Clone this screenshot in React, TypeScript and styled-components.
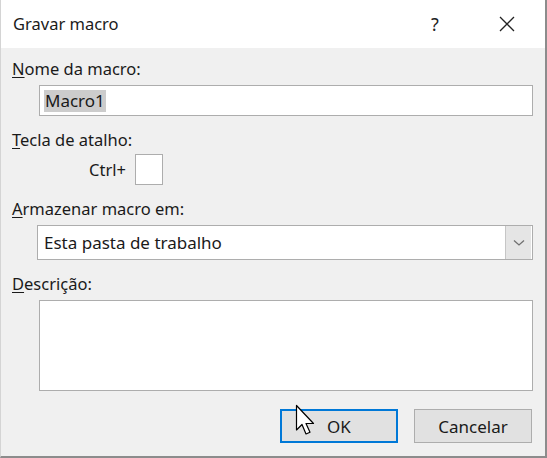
import React from "react";
import styled, { createGlobalStyle } from "styled-components";

const Global = createGlobalStyle`
  html, body { margin: 0; padding: 0; background: #ffffff; }
  * { box-sizing: border-box; }
`;

const Dialog = styled.div`
  position: relative;
  width: 547px;
  height: 458px;
  display: flex;
  flex-direction: column;
  background: #f0f0f0;
  border-left: 1px solid #d4d4d4;
  border-right: 2px solid #8c8c8c;
  border-bottom: 2px solid #8c8c8c;
  font-family: "Noto Sans", "Open Sans", sans-serif;
  color: #1a1a1a;
  overflow: hidden;
`;

const TitleBar = styled.div`
  height: 48px;
  flex: none;
  background: #ffffff;
  display: flex;
  align-items: center;
  padding-left: 12px;
`;

const Title = styled.div`
  flex: 1;
  font-size: 16.5px;
  color: #1b1b1b;
  padding-bottom: 2px;
`;

const TitleButton = styled.div<{ $w: number }>`
  width: ${(p) => p.$w}px;
  height: 48px;
  display: flex;
  align-items: center;
  justify-content: center;
  font-size: 18px;
  color: #222;
`;

const Body = styled.div`
  flex: 1;
  display: flex;
  flex-direction: column;
  padding: 11px 12px 0 11px;
`;

const Label = styled.div<{ $mt?: number }>`
  font-size: 16.5px;
  line-height: 20px;
  margin-top: ${(p) => p.$mt ?? 0}px;
  color: #1a1a1a;
  u { text-decoration: underline; text-underline-offset: 2px; }
`;

const Field = styled.div<{ $ml: number; $h: number; $mt: number }>`
  margin-left: ${(p) => p.$ml}px;
  margin-top: ${(p) => p.$mt}px;
  height: ${(p) => p.$h}px;
  background: #ffffff;
  border: 1px solid #adadad;
  display: flex;
  align-items: center;
  font-size: 17px;
`;

const Selected = styled.span`
  margin-left: 4px;
  background: #cccccc;
  padding: 0 1px 0 1px;
  line-height: 22px;
`;

const ShortcutRow = styled.div`
  display: flex;
  align-items: center;
  margin-top: 4px;
  padding-left: 77px;
  gap: 9px;
  font-size: 16.5px;
`;

const KeyBox = styled.div`
  width: 28px;
  height: 31px;
  background: #ffffff;
  border: 1px solid #adadad;
`;

const SelectText = styled.div`
  flex: 1;
  padding-left: 6px;
`;

const DropButton = styled.div`
  width: 26px;
  height: 100%;
  background: #e5e5e5;
  border-left: 1px solid #c6c6c6;
  display: flex;
  align-items: center;
  justify-content: center;
  margin-right: 1px;
`;

const Footer = styled.div`
  display: flex;
  justify-content: flex-end;
  gap: 16px;
  margin-top: 18px;
  padding-right: 1px;
`;

const Button = styled.div<{ $default?: boolean }>`
  width: 118px;
  height: 34px;
  display: flex;
  align-items: center;
  justify-content: center;
  background: #e1e1e1;
  border: ${(p) => (p.$default ? "2px solid #0078d7" : "1px solid #adadad")};
  font-size: 17px;
  color: #1a1a1a;
`;

const Cursor = styled.svg`
  position: absolute;
  left: 294px;
  top: 404px;
`;

export default function App() {
  return (
    <>
      <Global />
      <Dialog>
        <TitleBar>
          <Title>Gravar macro</Title>
          <TitleButton $w={68}>?</TitleButton>
          <TitleButton $w={76}>
            <svg width="16" height="16" viewBox="0 0 16 16">
              <path d="M1 1 L15 15 M15 1 L1 15" stroke="#222" strokeWidth="1.3" />
            </svg>
          </TitleButton>
        </TitleBar>
        <Body>
          <Label>
            <u>N</u>ome da macro:
          </Label>
          <Field $ml={27} $h={31} $mt={6}>
            <Selected>Macro1</Selected>
          </Field>
          <Label $mt={14}>
            <u>T</u>ecla de atalho:
          </Label>
          <ShortcutRow>
            <span>Ctrl+</span>
            <KeyBox />
          </ShortcutRow>
          <Label $mt={14}>
            <u>A</u>rmazenar macro em:
          </Label>
          <Field $ml={25} $h={35} $mt={6}>
            <SelectText>Esta pasta de trabalho</SelectText>
            <DropButton>
              <svg width="12" height="8" viewBox="0 0 12 8">
                <path d="M1 1.5 L6 6 L11 1.5" stroke="#707070" strokeWidth="1.3" fill="none" />
              </svg>
            </DropButton>
          </Field>
          <Label $mt={14}>
            <u>D</u>escrição:
          </Label>
          <Field $ml={27} $h={91} $mt={6} />
          <Footer>
            <Button $default>OK</Button>
            <Button>Cancelar</Button>
          </Footer>
        </Body>
        <Cursor width="22" height="34" viewBox="0 0 22 34">
          <path
            d="M1.5 1.5 L1.5 26 L7 20.5 L11 30 L15 28.3 L11 19.5 L18.5 19.5 Z"
            fill="#ffffff"
            stroke="#000000"
            strokeWidth="1.2"
            strokeLinejoin="round"
          />
        </Cursor>
      </Dialog>
    </>
  );
}
